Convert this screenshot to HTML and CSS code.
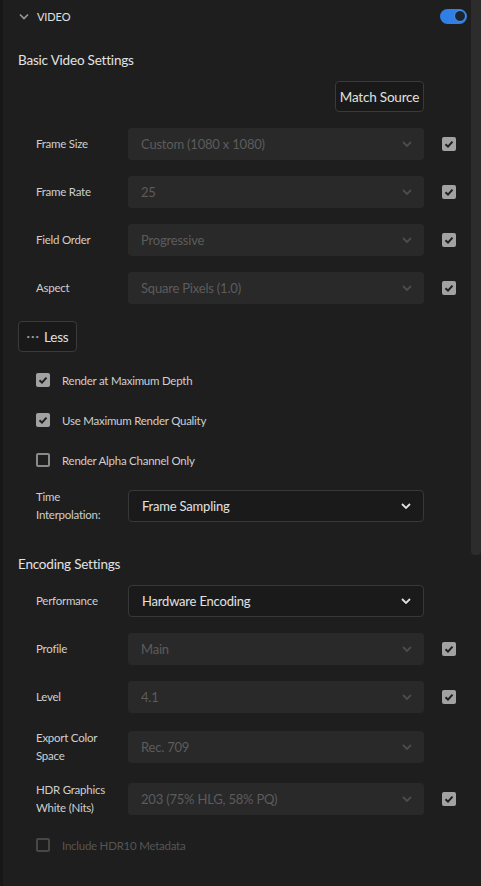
FILE: index.html
```html
<!DOCTYPE html>
<html>
<head>
<meta charset="utf-8">
<link rel="stylesheet" href="styles.css">
</head>
<body>
<div class="page">
  <div class="edge"></div>
  <main class="panel">
    <header class="section-head">
      <svg class="caret" width="10" height="7" viewBox="0 0 10 7"><path d="M1 1.5 L5 5.5 L9 1.5" fill="none" stroke="#9a9a9a" stroke-width="1.6"/></svg>
      <span class="section-name">VIDEO</span>
      <span class="toggle"><span class="knob"></span></span>
    </header>

    <h2 class="group-title first">Basic Video Settings</h2>
    <div class="match-row"><button class="btn">Match Source</button></div>

    <div class="rows">
      <div class="row">
        <span class="label">Frame Size</span>
        <div class="select disabled"><span>Custom (1080 x 1080)</span><svg class="chev" viewBox="0 0 10 6"><path d="M1 1 L5 5 L9 1"/></svg></div>
        <span class="check on"><svg viewBox="0 0 14 14"><path d="M3.5 7.2 L6 9.6 L10.5 4.6"/></svg></span>
      </div>
      <div class="row">
        <span class="label">Frame Rate</span>
        <div class="select disabled"><span>25</span><svg class="chev" viewBox="0 0 10 6"><path d="M1 1 L5 5 L9 1"/></svg></div>
        <span class="check on"><svg viewBox="0 0 14 14"><path d="M3.5 7.2 L6 9.6 L10.5 4.6"/></svg></span>
      </div>
      <div class="row">
        <span class="label">Field Order</span>
        <div class="select disabled"><span>Progressive</span><svg class="chev" viewBox="0 0 10 6"><path d="M1 1 L5 5 L9 1"/></svg></div>
        <span class="check on"><svg viewBox="0 0 14 14"><path d="M3.5 7.2 L6 9.6 L10.5 4.6"/></svg></span>
      </div>
      <div class="row">
        <span class="label">Aspect</span>
        <div class="select disabled"><span>Square Pixels (1.0)</span><svg class="chev" viewBox="0 0 10 6"><path d="M1 1 L5 5 L9 1"/></svg></div>
        <span class="check on"><svg viewBox="0 0 14 14"><path d="M3.5 7.2 L6 9.6 L10.5 4.6"/></svg></span>
      </div>
    </div>

    <button class="btn less"><span class="dots">&bull;&bull;&bull;</span>Less</button>

    <div class="rows checks">
      <label class="crow"><span class="check on"><svg viewBox="0 0 14 14"><path d="M3.5 7.2 L6 9.6 L10.5 4.6"/></svg></span>Render at Maximum Depth</label>
      <label class="crow"><span class="check on"><svg viewBox="0 0 14 14"><path d="M3.5 7.2 L6 9.6 L10.5 4.6"/></svg></span>Use Maximum Render Quality</label>
      <label class="crow"><span class="check off"></span>Render Alpha Channel Only</label>
      <div class="row tall">
        <span class="label">Time Interpolation:</span>
        <div class="select active"><span>Frame Sampling</span><svg class="chev" viewBox="0 0 10 6"><path d="M1 1 L5 5 L9 1"/></svg></div>
      </div>
    </div>

    <h2 class="group-title second">Encoding Settings</h2>

    <div class="rows">
      <div class="row">
        <span class="label">Performance</span>
        <div class="select active"><span>Hardware Encoding</span><svg class="chev" viewBox="0 0 10 6"><path d="M1 1 L5 5 L9 1"/></svg></div>
      </div>
      <div class="row">
        <span class="label">Profile</span>
        <div class="select disabled"><span>Main</span><svg class="chev" viewBox="0 0 10 6"><path d="M1 1 L5 5 L9 1"/></svg></div>
        <span class="check on"><svg viewBox="0 0 14 14"><path d="M3.5 7.2 L6 9.6 L10.5 4.6"/></svg></span>
      </div>
      <div class="row">
        <span class="label">Level</span>
        <div class="select disabled"><span>4.1</span><svg class="chev" viewBox="0 0 10 6"><path d="M1 1 L5 5 L9 1"/></svg></div>
        <span class="check on"><svg viewBox="0 0 14 14"><path d="M3.5 7.2 L6 9.6 L10.5 4.6"/></svg></span>
      </div>
      <div class="row tall">
        <span class="label">Export Color Space</span>
        <div class="select disabled"><span>Rec. 709</span><svg class="chev" viewBox="0 0 10 6"><path d="M1 1 L5 5 L9 1"/></svg></div>
      </div>
      <div class="row tall">
        <span class="label">HDR Graphics White (Nits)</span>
        <div class="select disabled"><span>203 (75% HLG, 58% PQ)</span><svg class="chev" viewBox="0 0 10 6"><path d="M1 1 L5 5 L9 1"/></svg></div>
        <span class="check on"><svg viewBox="0 0 14 14"><path d="M3.5 7.2 L6 9.6 L10.5 4.6"/></svg></span>
      </div>
      <label class="crow dim"><span class="check off"></span>Include HDR10 Metadata</label>
    </div>
  </main>
  <div class="scrollbar"><div class="thumb"></div></div>
</div>
</body>
</html>
```

FILE: styles.css
```css
html, body {
  margin: 0;
  padding: 0;
  background: #1e1e1e;
  height: 886px;
  overflow: hidden;
}
body {
  font-family: Lato, "Open Sans", "Liberation Sans", sans-serif;
  color: #cfcfcf;
}
.page {
  display: flex;
  height: 886px;
}
.edge {
  width: 3px;
  background: #171717;
  flex: none;
}
.panel {
  flex: 1;
  padding-left: 15px;
  display: flex;
  flex-direction: column;
  align-items: flex-start;
}
.scrollbar {
  width: 10px;
  flex: none;
  background: #1e1e1e;
}
.thumb {
  height: 555px;
  background: #2c2c2c;
  border-radius: 0 0 4px 4px;
}
.section-head {
  display: flex;
  align-items: center;
  height: 32px;
  width: 449px;
}
.caret {
  margin-left: 1px;
  width: 10px;
  height: 7px;
}
.section-name {
  margin-left: 8px;
  font-size: 11px;
  color: #e0e0e0;
  letter-spacing: -0.1px;
}
.toggle {
  margin-left: auto;
  width: 27px;
  height: 15px;
  border-radius: 8px;
  background: #2f7fe6;
  position: relative;
}
.knob {
  position: absolute;
  right: 1px;
  top: 1px;
  width: 10px;
  height: 10px;
  border-radius: 50%;
  background: #1c2430;
  border: 1.5px solid #4a95f0;
}
.group-title {
  margin: 0;
  font-size: 13.5px;
  letter-spacing: -0.2px;
  font-weight: normal;
  color: #e2e2e2;
  height: 20px;
  line-height: 20px;
}
.group-title.first { margin-top: 18px; }
.group-title.second { margin-top: 30px; }
.match-row {
  width: 406px;
  display: flex;
  justify-content: flex-end;
  margin-top: 11px;
}
.btn {
  font-family: inherit;
  font-size: 13.5px;
  letter-spacing: -0.2px;
  color: #e0e0e0;
  background: #191919;
  border: 1px solid #3a3a3a;
  border-radius: 4px;
  height: 31px;
  padding: 0 6px;
  white-space: nowrap;
}
.match-row .btn { width: 89px; padding: 0; }
.less {
  margin-top: 17px;
  width: 59px;
  display: flex;
  align-items: center;
  justify-content: center;
  padding: 0;
}
.dots {
  font-size: 6px;
  letter-spacing: 1px;
  color: #9a9a9a;
  margin-right: 4px;
}
.rows {
  display: flex;
  flex-direction: column;
  gap: 16px;
  margin-top: 16px;
}
.group-title.second + .rows { margin-top: 11px; }
.checks { margin-top: 16px; }
.row {
  display: flex;
  align-items: center;
  height: 32px;
}
.row.tall { height: 36px; }
.label {
  font-size: 11.5px;
  letter-spacing: -0.25px;
  line-height: 18px;
  color: #cfcfcf;
  flex: none;
}
.row .label { width: 86px; margin-right: 6px; padding-left: 18px; }
.select {
  width: 296px;
  height: 32px;
  box-sizing: border-box;
  border-radius: 4px;
  display: flex;
  align-items: center;
  justify-content: space-between;
  padding: 0 12px 0 13px;
  font-size: 13px;
  letter-spacing: -0.2px;
}
.select.disabled {
  background: #292929;
  color: #5c5c5c;
}
.select.active {
  background: #1a1a1a;
  border: 1px solid #383838;
  color: #e2e2e2;
  padding-left: 13px;
}
.chev {
  width: 10px;
  height: 6px;
  fill: none;
  stroke-width: 1.8;
}
.disabled .chev { stroke: #4c4c4c; }
.active .chev { stroke: #e0e0e0; }
.check {
  width: 14px;
  height: 14px;
  box-sizing: border-box;
  border-radius: 2px;
  flex: none;
}
.row .check { margin-left: 18px; }
.check.on { background: #a2a2a2; }
.check svg {
  display: block;
  width: 14px;
  height: 14px;
  fill: none;
  stroke: #1e1e1e;
  stroke-width: 2;
}
.check.off { border: 2px solid #8a8a8a; }
.crow {
  display: flex;
  align-items: center;
  height: 24px;
  padding-left: 18px;
  font-size: 11.5px;
  letter-spacing: -0.25px;
  color: #cfcfcf;
}
.crow .check { margin-right: 12px; }
.crow.dim { color: #555; }
.crow.dim .check.off { border-color: #474747; }
```
